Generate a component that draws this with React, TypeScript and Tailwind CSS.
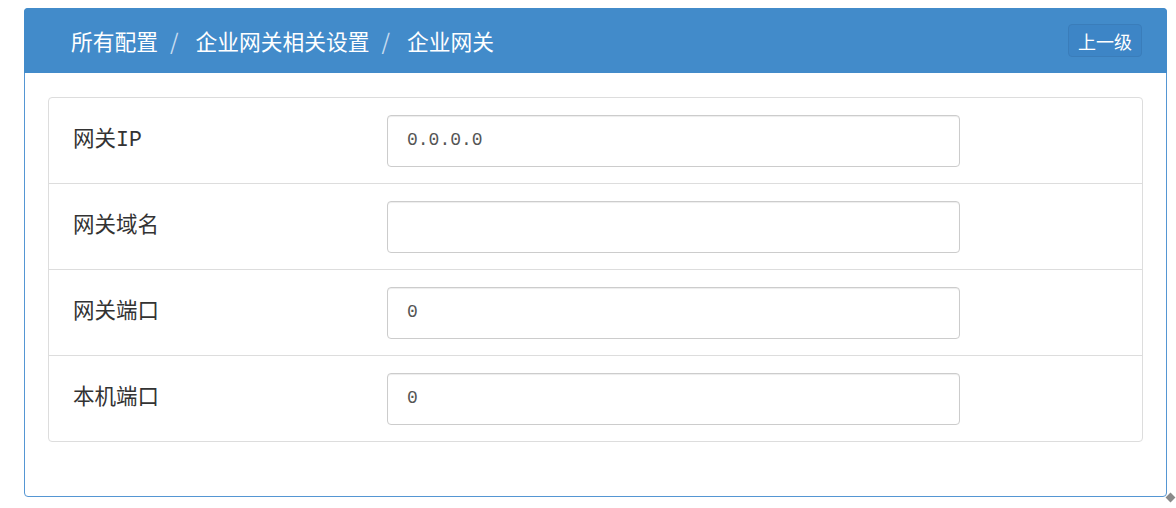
import React from "react";

const rows = [
  { label: "网关IP", value: "0.0.0.0" },
  { label: "网关域名", value: "" },
  { label: "网关端口", value: "0" },
  { label: "本机端口", value: "0" },
];

export default function App() {
  return (
    <div className="w-[1176px] h-[508px] bg-white pt-[8px] pl-[24px]" style={{ fontFamily: '"Liberation Mono", "Noto Sans CJK SC", monospace' }}>
      <div className="relative w-[1143px] h-[489px] border border-[#5596d3] rounded-[4px] bg-white flex flex-col">
        <div className="h-[65px] -mx-px -mt-px bg-[#428bca] rounded-t-[4px] flex items-center justify-between pl-[47px] pr-[25px] text-white">
          <div className="flex items-center text-[21.75px] leading-none" style={{ fontFamily: '"Noto Sans CJK SC", sans-serif' }}>
            <span>所有配置</span>
            <span className="pl-[12px] pr-[14px] text-[#c7dcf0]">/</span>
            <span className="ml-[3px]">企业网关相关设置</span>
            <span className="pl-[12px] pr-[14px] text-[#c7dcf0]">/</span>
            <span className="ml-[3px]">企业网关</span>
          </div>
          <button className="h-[33px] w-[74px] rounded-[4px] bg-[#3d85c6] border border-[#3a7dba] text-white text-[18px] leading-none" style={{ fontFamily: '"Noto Sans CJK SC", sans-serif' }}>
            上一级
          </button>
        </div>
        <div className="px-[23px] pt-[24px]">
          <div className="border border-[#dddddd] rounded-[4px]">
            {rows.map((r, i) => (
              <div
                key={r.label}
                className={`flex items-center pl-[24px] ${i > 0 ? "h-[86px] border-t border-[#dddddd]" : "h-[85px]"}`}
              >
                <div className="w-[314px] text-[21.5px] text-[#333] leading-none">{r.label}</div>
                <div className="w-[573px] h-[52px] border border-[#cccccc] rounded-[4px] shadow-[inset_0_1px_1px_rgba(0,0,0,0.075)] flex items-center pl-[19px] text-[18px] text-[#555]">
                  {r.value}
                </div>
              </div>
            ))}
          </div>
        </div>
        <div className="absolute right-[-8px] bottom-[-5px] w-[7px] h-[7px] bg-[#8a8a8a] rotate-45" />
      </div>
    </div>
  );
}
